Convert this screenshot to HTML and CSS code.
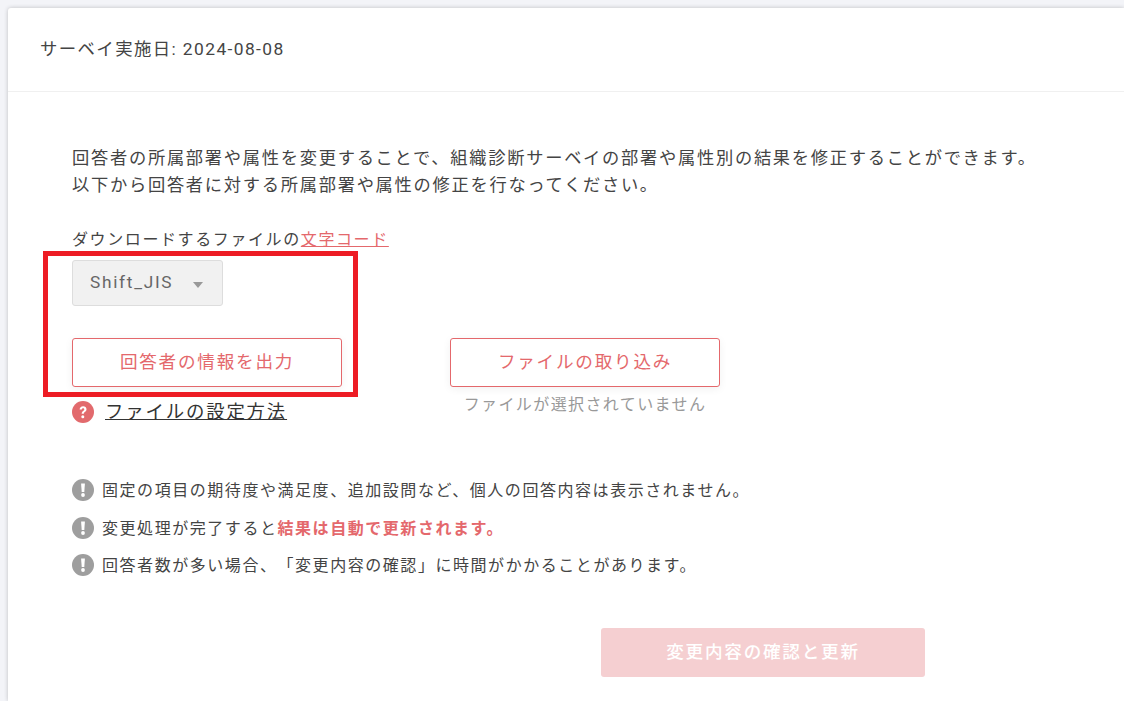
FILE: index.html
```html
<!DOCTYPE html>
<html lang="ja">
<head>
  <meta charset="UTF-8" />
  <meta name="viewport" content="width=device-width, initial-scale=1.0" />
  <title>組織診断サーベイ</title>
  <link rel="stylesheet" href="styles.css">
</head>
<body>
  <div class="card">
    <div class="card-header">サーベイ実施日: 2024-08-08</div>
    <div class="card-body">
      <p class="lead">回答者の所属部署や属性を変更することで、組織診断サーベイの部署や属性別の結果を修正することができます。<br>以下から回答者に対する所属部署や属性の修正を行なってください。</p>

      <div class="charset-label">ダウンロードするファイルの<a class="charset-link" href="#">文字コード</a></div>
      <div class="select-box">
        <span class="select-value">Shift_JIS</span>
        <span class="select-arrow"></span>
      </div>

      <div class="file-actions">
        <div class="file-col">
          <button class="btn-outline" type="button">回答者の情報を出力</button>
          <div class="help-row">
            <svg class="help-icon" viewBox="0 0 22 22">
              <circle cx="11" cy="11" r="11" fill="#e26a6d" />
              <path d="M7.6 8.6c0-2 1.5-3.3 3.5-3.3s3.4 1.2 3.4 3c0 1.4-.8 2.1-1.7 2.8-.7.5-1 .9-1 1.7H9.700c0-1.400.5-2.100 1.400-2.800.8-.6 1.200-1 1.200-1.600 0-.7-.5-1.200-1.200-1.200-.8 0-1.300.6-1.300 1.400z" fill="#fff" />
              <circle cx="10.800" cy="15.800" r="1.500" fill="#fff" />
            </svg>
            <a class="help-link" href="#">ファイルの設定方法</a>
          </div>
        </div>
        <div class="file-col">
          <button class="btn-outline" type="button">ファイルの取り込み</button>
          <div class="file-status">ファイルが選択されていません</div>
        </div>
      </div>

      <ul class="notes">
        <li>
          <svg class="note-icon" viewBox="0 0 22 22">
            <circle cx="11" cy="11" r="11" fill="#9e9e9e" />
            <path d="M9.100 4.500h3.800l-.6 8.500h-2.600z" fill="#fff" />
            <circle cx="11" cy="16" r="1.900" fill="#fff" />
          </svg>
          <span>固定の項目の期待度や満足度、追加設問など、個人の回答内容は表示されません。</span>
        </li>
        <li>
          <svg class="note-icon" viewBox="0 0 22 22">
            <circle cx="11" cy="11" r="11" fill="#9e9e9e" />
            <path d="M9.100 4.500h3.800l-.6 8.500h-2.600z" fill="#fff" />
            <circle cx="11" cy="16" r="1.900" fill="#fff" />
          </svg>
          <span>変更処理が完了すると<strong class="note-strong">結果は自動で更新されます。</strong></span>
        </li>
        <li>
          <svg class="note-icon" viewBox="0 0 22 22">
            <circle cx="11" cy="11" r="11" fill="#9e9e9e" />
            <path d="M9.100 4.500h3.800l-.6 8.500h-2.600z" fill="#fff" />
            <circle cx="11" cy="16" r="1.900" fill="#fff" />
          </svg>
          <span>回答者数が多い場合、「変更内容の確認」に時間がかかることがあります。</span>
        </li>
      </ul>

      <button class="btn-submit" type="button" disabled>変更内容の確認と更新</button>
    </div>
  </div>

  <!-- annotation drawn over the screen -->
  <div class="highlight-box"></div>
</body>
</html>
```

FILE: styles.css
```css
html, body {
  height: 100%;
}
body {
  margin: 0;
  background: #f3f4f8;
  font-family: Roboto, 'Noto Sans CJK JP', sans-serif;
  color: #444;
  text-spacing-trim: space-all;
  overflow: hidden;
  position: relative;
}
.card {
  margin: 8px 0 0 8px;
  height: calc(100vh - 8px);
  background: white;
  border-radius: 3px 0 0 0;
  box-shadow: 0 0 4px rgba(0,0,0,0.22);
}
.card-header {
  height: 84px;
  box-sizing: border-box;
  padding: 29px 32px 0;
  border-bottom: 1px solid #f0f0f0;
  font-size: 17.4px;
  line-height: 24px;
  letter-spacing: 1.4px;
}
.card-body {
  padding: 53px 0 0 64px;
}
.lead {
  margin: 0;
  font-size: 17.25px;
  line-height: 27px;
  letter-spacing: 1.725px;
  white-space: nowrap;
}
.charset-label {
  margin-top: 29px;
  font-size: 16px;
  line-height: 24px;
  letter-spacing: 1.6px;
}
.charset-link {
  color: #e4686c;
}
.select-box {
  display: flex;
  align-items: center;
  justify-content: space-between;
  box-sizing: border-box;
  width: 151px;
  height: 46px;
  margin-top: 8px;
  padding: 0 19px 0 17px;
  background: #f1f1f1;
  border: 1px solid #ddd;
  border-radius: 3px;
  color: #666;
  font-size: 17.25px;
  letter-spacing: 1.725px;
}
.select-value {
  margin-bottom: 2px;
}
.select-arrow {
  width: 0;
  height: 0;
  margin-top: 3px;
  border-left: 5px solid transparent;
  border-right: 5px solid transparent;
  border-top: 6px solid #999;
}
.file-actions {
  display: flex;
  gap: 108px;
  margin-top: 32px;
}
.file-col {
  width: 270px;
}
.btn-outline {
  display: block;
  width: 270px;
  height: 49px;
  padding: 0 0 5px;
  background: white;
  border: 1px solid #e4686c;
  border-radius: 3px;
  box-shadow: 0 2px 8px rgba(0,0,0,0.06);
  color: #e4686c;
  font-family: inherit;
  font-size: 17.6px;
  letter-spacing: 1.76px;
}
.help-row {
  display: flex;
  align-items: center;
  gap: 11px;
  margin-top: 13px;
}
.help-icon {
  width: 22px;
  height: 22px;
  flex: none;
}
.help-link {
  color: #333;
  font-size: 18.4px;
  line-height: 24px;
  letter-spacing: 1.84px;
  white-space: nowrap;
}
.file-status {
  margin-top: 5px;
  color: #999;
  font-size: 16px;
  line-height: 26px;
  letter-spacing: 1.4px;
  text-align: center;
  white-space: nowrap;
}
.notes {
  list-style: none;
  margin: 46.7px 0 0;
  padding: 0;
}
.notes li {
  display: flex;
  align-items: center;
  gap: 8px;
  height: 37.5px;
  font-size: 16px;
  letter-spacing: 1.55px;
  white-space: nowrap;
}
.note-icon {
  width: 22px;
  height: 22px;
  flex: none;
  margin-top: 2px;
}
.note-strong {
  color: #e4686c;
  font-weight: bold;
}
.btn-submit {
  display: block;
  width: 324px;
  height: 49px;
  margin: 44.7px 0 0 529px;
  padding: 0 0 3px;
  background: #f5cfd1;
  border: none;
  border-radius: 3px;
  color: white;
  font-family: inherit;
  font-size: 17.6px;
  font-weight: 500;
  letter-spacing: 1.760px;
}
.highlight-box {
  position: absolute;
  left: 43px;
  top: 251px;
  width: 315px;
  height: 146px;
  box-sizing: border-box;
  border: 5px solid #ed1c24;
}
```
